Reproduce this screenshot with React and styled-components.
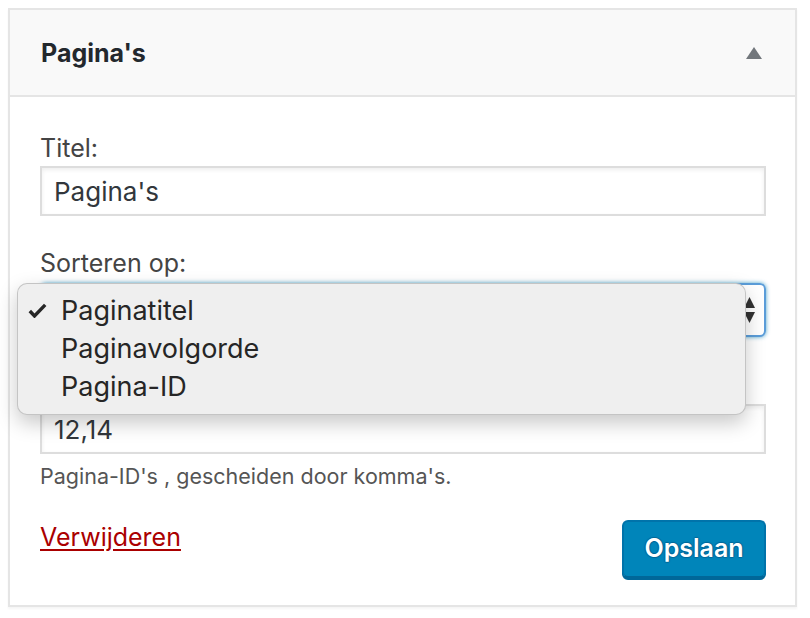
import React from 'react';
import styled, { createGlobalStyle } from 'styled-components';

const GlobalStyle = createGlobalStyle`
  body {
    margin: 0;
    background: #fff;
    font-family: Inter, "Noto Sans", sans-serif;
    color: #444;
  }
`;

const Panel = styled.section`
  margin: 8px;
  width: 789px;
  box-sizing: border-box;
  border: 2px solid #e5e5e5;
  box-shadow: 0 2px 2px rgba(0, 0, 0, 0.04);
  background: #fff;
`;

const Header = styled.header`
  height: 85px;
  display: flex;
  align-items: center;
  justify-content: space-between;
  padding: 0 33px 0 31px;
  background: #f9f9f9;
  border-bottom: 2px solid #e5e5e5;
`;

const Title = styled.h3`
  margin: 0;
  font-size: 25px;
  font-weight: 700;
  color: #23282d;
  line-height: 36px;
`;

const Body = styled.div`
  padding: 33px 29px 27px 30px;
  display: flex;
  flex-direction: column;
`;

const Field = styled.div`
  position: relative;
  display: flex;
  flex-direction: column;
  margin-top: ${(p) => p.$gap}px;
`;

const Label = styled.label`
  display: block;
  min-height: 36px;
  font-size: 25px;
  line-height: 36px;
  color: #444;
`;

const TextInput = styled.input`
  box-sizing: border-box;
  width: 100%;
  height: 50px;
  margin: 0;
  padding: 0 12px;
  border: 2px solid #ddd;
  box-shadow: inset 0 2px 4px rgba(0, 0, 0, 0.07);
  background: #fff;
  font-family: inherit;
  font-size: 26px;
  color: #32373c;
  outline: none;
`;

const SelectBox = styled.div`
  box-sizing: border-box;
  margin-top: 2px;
  height: 54px;
  display: flex;
  align-items: center;
  justify-content: flex-end;
  padding: 0 9px 0 12px;
  border: 2px solid #5b9dd9;
  border-radius: 6px;
  box-shadow: 0 0 4px rgba(30, 140, 190, 0.8);
`;

const Menu = styled.ul`
  position: absolute;
  left: -23px;
  top: 38px;
  width: 729px;
  margin: 0;
  padding: 8px 0;
  box-sizing: border-box;
  list-style: none;
  background: #efefef;
  border: 1px solid rgba(0, 0, 0, 0.18);
  border-radius: 10px;
  box-shadow: 0 8px 20px rgba(0, 0, 0, 0.22);
  z-index: 2;
`;

const MenuItem = styled.li`
  position: relative;
  height: 38px;
  line-height: 38px;
  padding-left: 43px;
  font-size: 27px;
  color: #262626;
`;

const Check = styled.svg`
  position: absolute;
  left: 10px;
  top: 11px;
`;

const Description = styled.p`
  margin: 7px 0 0;
  font-size: 21.5px;
  line-height: 30px;
  color: #555;
`;

const Footer = styled.div`
  margin-top: 28px;
  display: flex;
  justify-content: space-between;
  align-items: flex-start;
`;

const DeleteLink = styled.a`
  font-size: 25px;
  line-height: 36px;
  color: #a00;
  text-decoration: underline;
  text-underline-offset: 3px;
  cursor: pointer;
`;

const SaveButton = styled.button`
  margin-top: 1px;
  box-sizing: border-box;
  width: 144px;
  height: 58px;
  padding: 0 0 2px;
  border: 2px solid #0073aa;
  border-bottom-color: #006799;
  border-radius: 6px;
  background: #0085ba;
  box-shadow: 0 2px 0 #006799;
  color: #fff;
  font-family: inherit;
  font-size: 25px;
  font-weight: 600;
  text-shadow: 0 -1px 1px #006799, 1px 0 1px #006799, 0 1px 1px #006799, -1px 0 1px #006799;
`;

const Arrows = () => (
  <svg width="11" height="26" viewBox="0 0 11 26">
    <path d="M5.5 0 L11 11 L0 11 Z" fill="#333" />
    <path d="M0 15 L11 15 L5.5 26 Z" fill="#333" />
  </svg>
);

const options = ['Paginatitel', 'Paginavolgorde', 'Pagina-ID'];

export default function App() {
  return (
    <>
      <GlobalStyle />
      <Panel>
        <Header>
          <Title>Pagina's</Title>
          <svg width="16" height="12" viewBox="0 0 16 12">
            <path d="M8 0 L16 12 L0 12 Z" fill="#72777c" />
          </svg>
        </Header>
        <Body>
          <Field $gap={0}>
            <Label>Titel:</Label>
            <TextInput defaultValue="Pagina's" />
          </Field>
          <Field $gap={29}>
            <Label>Sorteren op:</Label>
            <SelectBox>
              <Arrows />
            </SelectBox>
            <Menu>
              {options.map((o, i) => (
                <MenuItem key={o}>
                  {i === 0 && (
                    <Check width="19" height="15" viewBox="0 0 19 15">
                      <path d="M1.8 8 L6.5 13 L17.2 1.8" stroke="#262626" strokeWidth="3.4" fill="none" />
                    </Check>
                  )}
                  {o}
                </MenuItem>
              ))}
            </Menu>
          </Field>
          <Field $gap={31}>
            <Label />
            <TextInput defaultValue="12,14" />
          </Field>
          <Description>Pagina-ID's , gescheiden door komma's.</Description>
          <Footer>
            <DeleteLink>Verwijderen</DeleteLink>
            <SaveButton>Opslaan</SaveButton>
          </Footer>
        </Body>
      </Panel>
    </>
  );
}
